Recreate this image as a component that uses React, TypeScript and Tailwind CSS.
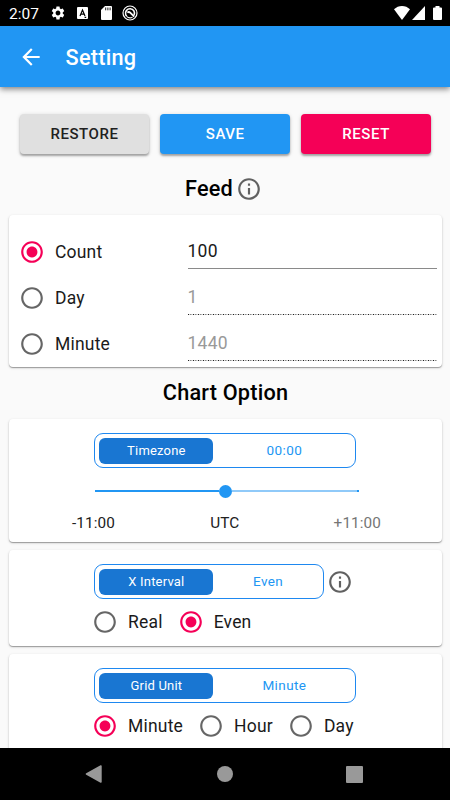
import type { ReactNode } from "react"
import clsx from "clsx"
import {
  MdArrowBack,
  MdInfoOutline,
  MdRadioButtonChecked,
  MdRadioButtonUnchecked,
  MdSettings,
} from "react-icons/md"

function StatusBar() {
  return (
    <div className="flex h-[26px] shrink-0 items-center bg-black pl-[9px] text-white">
      <span className="w-[41px] pt-[3px] text-[15.5px] leading-none">2:07</span>
      <MdSettings className="size-[16px]" />
      {/* keyboard */}
      <svg className="ml-[10.5px] h-[12px] w-[11px]" viewBox="0 0 11 12">
        <rect width="11" height="12" rx="1" fill="#fff" />
        <path d="M3 9 5.500 3 8 9M3.900 7.200h3.200M7.600 10.400h1.600" fill="none" stroke="#000" strokeWidth="1.2" />
      </svg>
      {/* sd card */}
      <svg className="ml-[13px] h-[14px] w-[11px]" viewBox="0 0 11 14">
        <path d="M4 0h6a1 1 0 0 1 1 1v12a1 1 0 0 1-1 1H1a1 1 0 0 1-1-1V4z" fill="#fff" />
        <path d="M4.700 1.500v2.800M6.900 1.500v2.800M9.100 1.500v2.800" stroke="#000" strokeWidth="0.9" />
      </svg>
      {/* app notification */}
      <svg className="ml-[10.5px] size-[16px]" viewBox="0 0 16 16" fill="none" stroke="#fff">
        <circle cx="8" cy="8" r="7" strokeWidth="1.2" />
        <path d="M4.600 11.200 3.700 9.600A4.500 4.500 0 1 1 12 10.200" strokeWidth="1.6" />
        <path d="M5.400 7.600c1-.9 2-.7 2.800.1l4 3.900" strokeWidth="1.8" />
        <path d="M4.500 11.300c1.700 1.500 4 1.900 6 .9" strokeWidth="1.1" />
      </svg>
      <svg className="ml-auto h-[14px] w-[16px]" viewBox="0 0 16 14">
        <path d="M0 3.300C2.200 1.200 5 0 8 0s5.800 1.200 8 3.300L8.400 13.600a.5.5 0 0 1-.8 0z" fill="#fff" />
      </svg>
      <svg className="ml-[2px] h-[14px] w-[13px]" viewBox="0 0 13 14">
        <path d="M13 0v14H0z" fill="#fff" />
      </svg>
      <svg className="mr-[8px] ml-[8px] h-[14px] w-[9px]" viewBox="0 0 9 14">
        <path d="M2.500 0h4v1.400H8a1 1 0 0 1 1 1V13a1 1 0 0 1-1 1H1a1 1 0 0 1-1-1V2.400a1 1 0 0 1 1-1h1.500z" fill="#fff" />
      </svg>
    </div>
  )
}

function RadioIcon({ checked }: { checked?: boolean }) {
  return checked ? (
    <MdRadioButtonChecked className="size-[26px] shrink-0 text-[#f50057]" />
  ) : (
    <MdRadioButtonUnchecked className="size-[26px] shrink-0 text-[#666666]" />
  )
}

function Card({ className, children }: { className?: string; children: ReactNode }) {
  return (
    <section
      className={clsx(
        "mr-[8px] ml-[9px] shrink-0 rounded-[4px] bg-white shadow-[0_1px_1px_rgba(0,0,0,0.3),0_1px_3px_rgba(0,0,0,0.16)]",
        className,
      )}
    >
      {children}
    </section>
  )
}

function ActionButton({ label, className }: { label: string; className: string }) {
  return (
    <button
      className={clsx(
        "h-[39.5px] flex-1 rounded-[4px] pt-[2px] text-[15px] leading-none font-medium tracking-[0.55px] shadow-[0_2px_2px_rgba(0,0,0,0.28),0_1px_4px_rgba(0,0,0,0.16)]",
        className,
      )}
    >
      {label}
    </button>
  )
}

interface FeedRowProps {
  label: string
  value: string
  checked?: boolean
}

function FeedRow({ label, value, checked }: FeedRowProps) {
  return (
    <div className="flex h-[46px] items-center">
      <RadioIcon checked={checked} />
      <span className="ml-[10px] w-[132.5px] pt-[2px] text-[17.5px] leading-none tracking-[0.2px] text-[#1a1a1a]">
        {label}
      </span>
      <div
        className={clsx(
          "relative h-full flex-1 pt-[12px] text-[17.5px] leading-[20px] tracking-[0.25px]",
          checked ? "text-[#1a1a1a]" : "text-[#999999]",
        )}
      >
        {value}
        {checked ? (
          <div className="absolute inset-x-0 bottom-[6px] h-px bg-[#8a8a8a]" />
        ) : (
          <div className="absolute inset-x-0 bottom-[6px] h-px bg-[repeating-linear-gradient(90deg,#222_0_1px,#ddd_1px_2px,#888_2px_3px,#bbb_3px_4px,#ddd_4px_5px)]" />
        )}
      </div>
    </div>
  )
}

function ValueTab({ label, value, className }: { label: string; value: string; className: string }) {
  return (
    <div className={clsx("flex h-[35px] items-center rounded-[9px] border border-[#1e88f0] pl-[4px]", className)}>
      <div className="flex h-[26px] w-[114px] items-center justify-center rounded-[6px] bg-[#1976d2] text-[13px] leading-none tracking-[0.2px] text-white">
        {label}
      </div>
      <div className="flex-1 text-center text-[13.5px] leading-none tracking-[0.4px] text-[#2196f3]">{value}</div>
    </div>
  )
}

function RadioOption({ label, checked, className }: { label: string; checked?: boolean; className?: string }) {
  return (
    <div className={clsx("flex items-center", className)}>
      <RadioIcon checked={checked} />
      <span className="ml-[10px] pt-[2px] text-[17.5px] leading-none tracking-[0.2px] text-[#1a1a1a]">{label}</span>
    </div>
  )
}

export default function App() {
  return (
    <div className="flex h-[800px] w-[450px] flex-col overflow-hidden bg-[#fafafa] font-['Roboto',sans-serif]">
      <StatusBar />
      <header className="z-10 flex h-[61px] shrink-0 items-center bg-[#2196f3] pl-[18px] text-white shadow-[0_2px_6px_rgba(0,0,0,0.5)]">
        <MdArrowBack className="size-[26px]" />
        <h1 className="ml-[21.5px] pt-[3px] text-[21.7px] leading-none font-medium tracking-[0.25px]">Setting</h1>
      </header>

      <main className="flex min-h-0 flex-1 flex-col overflow-hidden">
        <div className="mt-[27px] mr-[19px] ml-[19.5px] flex h-[40px] shrink-0 items-start gap-[11px]">
          <ActionButton label="RESTORE" className="bg-[#e0e0e0] text-[#212121]" />
          <ActionButton label="SAVE" className="bg-[#2196f3] text-white" />
          <ActionButton label="RESET" className="bg-[#f50057] text-white" />
        </div>

        <div className="flex h-[61px] shrink-0 items-center justify-center pt-[9px] pr-[3px]">
          <h2 className="text-[21.7px] leading-none font-medium tracking-[0.25px] text-black">Feed</h2>
          <MdInfoOutline className="ml-[3px] size-[26px] text-[#616161]" />
        </div>

        <Card className="h-[152px] pt-[14px] pr-[5px] pl-[10px]">
          <FeedRow label="Count" value="100" checked />
          <FeedRow label="Day" value="1" />
          <FeedRow label="Minute" value="1440" />
        </Card>

        <h2 className="flex h-[52px] shrink-0 items-center justify-center pl-px text-[21.7px] leading-none font-medium tracking-[0.2px] text-black">
          Chart Option
        </h2>

        <Card className="h-[123px] pt-[14px]">
          <ValueTab label="Timezone" value="00:00" className="ml-[85.4px] w-[262px]" />
          <div className="mt-[17px] ml-[86.4px] flex h-[12px] w-[263.5px] items-center">
            <div className="h-[2px] flex-1 bg-[#2196f3]" />
            <div className="size-[13px] rounded-full bg-[#2196f3]" />
            <div className="h-[2px] w-[125px] bg-[#90caf9]" />
            <div className="size-[2px] bg-[#2196f3]" />
          </div>
          <div className="mt-[17px] ml-[63px] flex w-[309px] justify-between text-[15.3px] leading-[18px] tracking-[0.1px] text-[#212121]">
            <span>-11:00</span>
            <span className="pl-px">UTC</span>
            <span className="text-[#757575]">+11:00</span>
          </div>
        </Card>

        <Card className="mt-[8px] h-[96px] pt-[14px]">
          <div className="flex items-center">
            <ValueTab label="X Interval" value="Even" className="ml-[85.4px] w-[229.5px]" />
            <MdInfoOutline className="ml-[3px] size-[26px] text-[#616161]" />
          </div>
          <div className="mt-[10px] ml-[83px] flex">
            <RadioOption label="Real" />
            <RadioOption label="Even" checked className="ml-[15px]" />
          </div>
        </Card>

        <Card className="mt-[8px] h-[110px] pt-[14px]">
          <ValueTab label="Grid Unit" value="Minute" className="ml-[85.4px] w-[262px]" />
          <div className="mt-[10px] ml-[83px] flex">
            <RadioOption label="Minute" checked />
            <RadioOption label="Hour" className="ml-[15px]" />
            <RadioOption label="Day" className="ml-[15px]" />
          </div>
        </Card>
      </main>

      <nav className="z-10 flex h-[52px] shrink-0 items-center bg-black">
        <svg className="ml-[85px] h-[18px] w-[17px]" viewBox="0 0 17 18">
          <path d="M15.5.3 1.2 8.2a.9.9 0 0 0 0 1.6l14.3 7.9c.7.3 1.2 0 1.2-.7V1c0-.7-.5-1-1.2-.7z" fill="#999" />
        </svg>
        <div className="ml-[115px] size-[16px] rounded-full bg-[#999999]" />
        <div className="ml-[113px] size-[17px] rounded-[1px] bg-[#999999]" />
      </nav>
    </div>
  )
}
